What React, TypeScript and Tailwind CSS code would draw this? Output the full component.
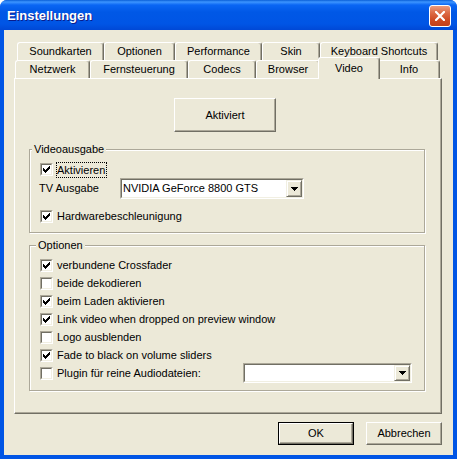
import React from "react";

function CheckMark() {
  const px: [number, number, number][] = [
    [6, 0, 1],
    [5, 1, 2],
    [0, 2, 1],
    [4, 2, 3],
    [0, 3, 2],
    [3, 3, 3],
    [0, 4, 5],
    [1, 5, 3],
    [2, 6, 1],
  ];
  return (
    <svg width="7" height="7" viewBox="0 0 7 7" shapeRendering="crispEdges" className="block">
      {px.map(([x, y, w], i) => (
        <rect key={i} x={x} y={y} width={w} height={1} fill="#000" />
      ))}
    </svg>
  );
}

function Checkbox({ checked }: { checked?: boolean }) {
  return (
    <div className="w-[13px] h-[13px] shrink-0 border border-t-[#aca899] border-l-[#aca899] border-b-white border-r-white">
      <div className="w-full h-full border border-t-[#716f64] border-l-[#716f64] border-b-[#f1efe2] border-r-[#f1efe2] bg-white flex items-center justify-center">
        {checked && <CheckMark />}
      </div>
    </div>
  );
}

function CheckRow({ checked, label }: { checked?: boolean; label: string }) {
  return (
    <div className="flex items-center h-[18px]">
      <Checkbox checked={checked} />
      <span className="ml-[4px] whitespace-nowrap">{label}</span>
    </div>
  );
}

function Arrow() {
  return (
    <svg width="7" height="4" viewBox="0 0 7 4" shapeRendering="crispEdges" className="block">
      <rect x="0" y="0" width="7" height="1" fill="#000" />
      <rect x="1" y="1" width="5" height="1" fill="#000" />
      <rect x="2" y="2" width="3" height="1" fill="#000" />
      <rect x="3" y="3" width="1" height="1" fill="#000" />
    </svg>
  );
}

function Combo({ text, className }: { text?: string; className: string }) {
  return (
    <div className={"border border-t-[#aca899] border-l-[#aca899] border-b-white border-r-white " + className}>
      <div className="h-full border border-t-[#716f64] border-l-[#716f64] border-b-[#f1efe2] border-r-[#f1efe2] bg-white flex items-stretch">
        <span className="flex-1 pl-[1px] whitespace-nowrap flex items-center">{text}</span>
        <div className="w-[16px] border border-t-[#f1efe2] border-l-[#f1efe2] border-b-[#716f64] border-r-[#716f64] shadow-[inset_1px_1px_0_#fff,inset_-1px_-1px_0_#aca899] bg-[#ece9d8] flex items-center justify-center">
          <Arrow />
        </div>
      </div>
    </div>
  );
}

function Btn({ children, className, def }: { children: React.ReactNode; className: string; def?: boolean }) {
  const inner = (
    <div className="w-full h-full border border-t-white border-l-white border-b-[#716f64] border-r-[#716f64] shadow-[inset_-1px_-1px_0_#aca899] bg-[#ece9d8] flex items-center justify-center">
      {children}
    </div>
  );
  if (def) {
    return <div className={"border border-black " + className}>{inner}</div>;
  }
  return <div className={className}>{inner}</div>;
}

const row1: [string, number][] = [
  ["Soundkarten", 87],
  ["Optionen", 71],
  ["Performance", 87],
  ["Skin", 58],
  ["Keyboard Shortcuts", 118],
];

const row2: [string, number, boolean][] = [
  ["Netzwerk", 75, false],
  ["Fernsteuerung", 98, false],
  ["Codecs", 68, false],
  ["Browser", 64, false],
  ["Video", 58, true],
  ["Info", 62, false],
];

function Tab({ label, w, selected }: { label: string; w: number; selected?: boolean }) {
  if (selected) {
    return (
      <div
        className="relative z-20 h-[22px] -mx-[2px] -mb-[1px] shrink-0 bg-[#ece9d8] border-t border-l border-t-white border-l-white border-r border-r-[#716f64] shadow-[inset_-1px_0_0_#aca899] rounded-t-[3px] flex items-center justify-center whitespace-nowrap"
        style={{ width: w + 4 }}
      >
        {label}
      </div>
    );
  }
  return (
    <div
      className="h-[18px] shrink-0 bg-[#ece9d8] border-t border-l border-t-white border-l-white border-r border-r-[#716f64] shadow-[inset_-1px_0_0_#aca899] rounded-t-[3px] flex items-center justify-center whitespace-nowrap"
      style={{ width: w }}
    >
      {label}
    </div>
  );
}

export default function App() {
  return (
    <div className="w-[457px] h-[459px] flex flex-col bg-[#0055e5] rounded-t-[7px] overflow-hidden font-['Liberation_Sans',Arial,sans-serif] text-[11px] leading-[13px] text-black">
      {/* Title bar */}
      <div className="h-[30px] shrink-0 flex items-center pl-[7px] pr-[6px] bg-[linear-gradient(180deg,#0a5fd8_0px,#3d95ff_2px,#0a66f4_5px,#0058e6_40%,#0055e5_80%,#0048d6_100%)]">
        <span className="flex-1 pt-[1px] text-white font-bold text-[13px] leading-[16px] [text-shadow:1px_1px_0_#0a1c8a]">
          Einstellungen
        </span>
        <div className="mt-[2px] w-[22px] h-[22px] rounded-[3px] border border-white bg-[linear-gradient(180deg,#eb9a7c_0%,#dc6a45_35%,#cf4a22_70%,#c2401b_100%)] flex items-center justify-center">
          <svg width="10" height="10" viewBox="0 0 10 10" className="block">
            <path d="M1 1 L9 9 M9 1 L1 9" stroke="#fff" strokeWidth="2.2" strokeLinecap="square" />
          </svg>
        </div>
      </div>

      {/* Body */}
      <div className="flex-1 ml-[4px] mr-[4px] mb-[4px] bg-[#ece9d8] flex flex-col pt-[12px] pl-[10px] pr-[11px]">
        {/* Tabs */}
        <div className="flex h-[18px] pl-[3px]">
          {row1.map(([l, w]) => (
            <Tab key={l} label={l} w={w} />
          ))}
        </div>
        <div className="relative z-10 flex items-end h-[18px] pl-[1px]">
          {row2.map(([l, w, s]) => (
            <Tab key={l} label={l} w={w} selected={s} />
          ))}
        </div>

        {/* Panel */}
        <div className="w-[428px] h-[336px] border border-t-white border-l-white border-b-[#716f64] border-r-[#716f64] shadow-[inset_-1px_-1px_0_#aca899] flex flex-col">
          <Btn className="mt-[19px] ml-[159px] w-[102px] h-[34px]">Aktiviert</Btn>

          <fieldset className="mt-[11px] ml-[14px] w-[396px] border border-[#aca899] shadow-[1px_1px_0_#fff,inset_1px_1px_0_#fff]">
            <legend className="ml-[2px] px-[2px] leading-[13px] bg-[#ece9d8]">Videoausgabe</legend>
            <div className="pl-[10px] pt-[7px] pb-[9px] flex flex-col">
              <div className="flex items-center h-[13px]">
                <Checkbox checked />
                <span className="ml-[3px] border border-dotted border-black leading-[14px] pr-[1px]">Aktivieren</span>
              </div>
              <div className="mt-[2px] flex items-center h-[21px]">
                <span className="w-[80px] -ml-[1px]">TV Ausgabe</span>
                <Combo text="NVIDIA GeForce 8800 GTS" className="w-[184px] h-[21px] ml-[1px]" />
              </div>
              <div className="mt-[11px] flex items-center h-[13px]">
                <Checkbox checked />
                <span className="ml-[4px]">Hardwarebeschleunigung</span>
              </div>
            </div>
          </fieldset>

          <fieldset className="mt-[6px] ml-[14px] w-[396px] border border-[#aca899] shadow-[1px_1px_0_#fff,inset_1px_1px_0_#fff]">
            <legend className="ml-[6px] px-[2px] leading-[13px] bg-[#ece9d8]">Optionen</legend>
            <div className="pl-[10px] pr-[12px] pt-[4px] pb-[8px] flex flex-col">
              <CheckRow checked label="verbundene Crossfader" />
              <CheckRow label="beide dekodieren" />
              <CheckRow checked label="beim Laden aktivieren" />
              <CheckRow checked label="Link video when dropped on preview window" />
              <CheckRow label="Logo ausblenden" />
              <CheckRow checked label="Fade to black on volume sliders" />
              <div className="flex items-center h-[18px]">
                <Checkbox />
                <span className="ml-[4px] whitespace-nowrap">Plugin für reine Audiodateien:</span>
                <Combo className="ml-auto w-[169px] h-[20px]" />
              </div>
            </div>
          </fieldset>
        </div>

        {/* Bottom buttons */}
        <div className="mt-[8px] flex justify-end gap-[12px]">
          <Btn def className="w-[76px] h-[23px]">OK</Btn>
          <Btn className="w-[76px] h-[23px]">Abbrechen</Btn>
        </div>
      </div>
    </div>
  );
}
